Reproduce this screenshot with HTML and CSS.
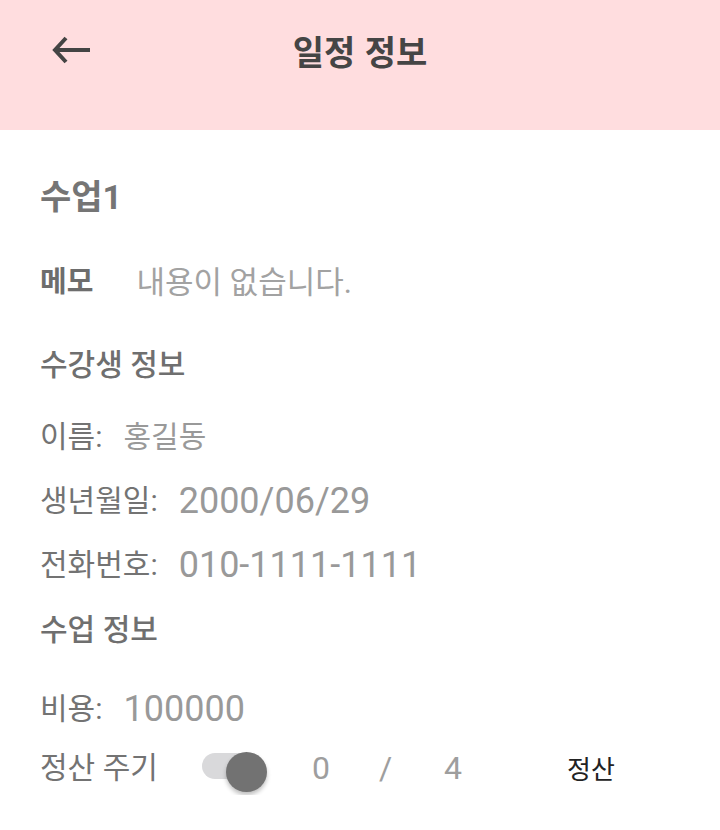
FILE: index.html
```html
<!DOCTYPE html>
<html lang="ko">
<head>
    <meta charset="UTF-8">
    <meta name="viewport" content="width=device-width, initial-scale=1.0">
    <title>일정 정보</title>
    <link rel="stylesheet" href="styles.css">
</head>
<body>
    <header class="toolbar">
        <a href="#" class="back" aria-label="뒤로">
            <svg width="40" height="28" viewBox="0 0 40 28">
                <path d="M14 2 L3 14 L14 26 M3 14 H38" fill="none" stroke="#444" stroke-width="4" stroke-linecap="butt" stroke-linejoin="miter"/>
            </svg>
        </a>
        <h1>일정 정보</h1>
        <span class="spacer"></span>
    </header>

    <main class="content">
        <h2 class="lesson-title">수업1</h2>

        <div class="memo">
            <span class="memo-label">메모</span>
            <span class="memo-text">내용이 없습니다.</span>
        </div>

        <h3 class="section">수강생 정보</h3>
        <div class="row">
            <span class="label">이름:</span>
            <span class="value value-name">홍길동</span>
        </div>
        <div class="row">
            <span class="label">생년월일:</span>
            <span class="value">2000/06/29</span>
        </div>
        <div class="row">
            <span class="label">전화번호:</span>
            <span class="value">010-1111-1111</span>
        </div>

        <h3 class="section section-lesson">수업 정보</h3>
        <div class="row row-cost">
            <span class="label">비용:</span>
            <span class="value">100000</span>
        </div>
        <div class="row row-pay">
            <span class="label label-pay">정산 주기</span>
            <label class="switch">
                <span class="track"></span>
                <span class="thumb"></span>
            </label>
            <span class="count count-done">0</span>
            <span class="count count-sep">/</span>
            <span class="count count-total">4</span>
            <button type="button" class="pay-btn">정산</button>
        </div>
    </main>
</body>
</html>
```

FILE: styles.css
```css
body {
    margin: 0;
    padding: 0;
    background-color: #ffffff;
    font-family: Roboto, "Noto Sans CJK KR", sans-serif;
    overflow: hidden;
}
.toolbar {
    display: flex;
    align-items: center;
    height: 130px;
    padding: 0 0 28px 0;
    box-sizing: border-box;
    background-color: #ffdddf;
}
.back {
    display: flex;
    align-items: center;
    justify-content: center;
    width: 56px;
    margin-left: 44px;
}
.back svg {
    display: block;
    margin-top: -2px;
}
.toolbar h1 {
    flex: 1;
    margin: 0 100px 0 0;
    text-align: center;
    font-family: "Noto Sans CJK KR", sans-serif;
    font-size: 34px;
    font-weight: bold;
    line-height: 1;
    color: #454545;
}
.spacer {
    width: 0;
}
.content {
    padding: 42px 40px 0 40px;
}
.lesson-title {
    margin: 0;
    height: 50px;
    display: flex;
    align-items: center;
    font-size: 34px;
    font-weight: bold;
    line-height: 1;
    color: #757575;
}
.memo {
    display: flex;
    align-items: center;
    height: 50px;
    margin-top: 35px;
}
.memo-label {
    font-size: 29px;
    font-weight: bold;
    line-height: 1;
    color: #6d6d6d;
}
.memo-text {
    margin-left: 43px;
    font-size: 31px;
    line-height: 1;
    color: #a2a2a2;
}
.section {
    margin: 33px 0 0 0;
    height: 50px;
    display: flex;
    align-items: center;
    font-size: 30px;
    font-weight: 500;
    line-height: 1;
    color: #6f6f6f;
}
.section-lesson {
    margin-top: 0;
    height: 65px;
}
.row {
    display: flex;
    align-items: center;
    height: 64px;
}
.section + .row {
    margin-top: 15px;
}
.row-cost {
    margin-top: 8px;
}
.row-pay {
    height: 54px;
}
.label {
    font-size: 30px;
    line-height: 1;
    color: #737373;
}
.value {
    margin-left: 21px;
    font-size: 36px;
    line-height: 1;
    color: #999999;
}
.value-name {
    font-size: 30px;
}
.label-pay {
    width: 162px;
}
.switch {
    position: relative;
    display: block;
    width: 66px;
    height: 44px;
}
.track {
    position: absolute;
    left: 0;
    top: 7px;
    width: 60px;
    height: 26px;
    border-radius: 13px;
    background-color: #d9d9db;
}
.thumb {
    position: absolute;
    left: 24px;
    top: 6px;
    width: 41px;
    height: 40px;
    border-radius: 50%;
    background-color: #727272;
    box-shadow: 0 3px 4px rgba(0,0,0,0.25);
}
.count {
    font-size: 32px;
    line-height: 1;
    color: #9e9e9e;
}
.count-done {
    margin-left: 44px;
    width: 67px;
}
.count-sep {
    width: 65px;
}
.count-total {
    width: 123px;
}
.pay-btn {
    padding: 0;
    border: none;
    background: none;
    font-family: "Noto Sans CJK KR", sans-serif;
    font-size: 26px;
    line-height: 1;
    color: #222222;
    cursor: pointer;
}
```
